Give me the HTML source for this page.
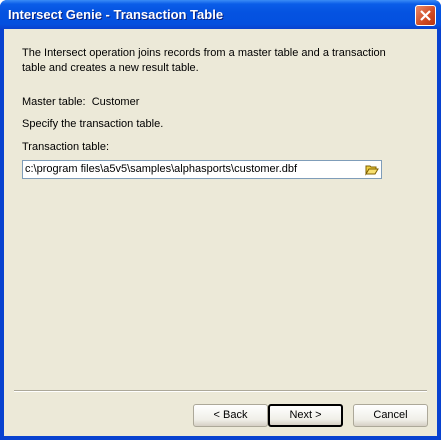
<!DOCTYPE html>
<html><head><style>
*{margin:0;padding:0;box-sizing:border-box}
body{width:441px;height:440px;overflow:hidden;font-family:"Liberation Sans",sans-serif;font-size:11px;color:#000;background:#fff}
#win{position:absolute;left:0;top:0;width:441px;height:440px;background:#0842d0;border-radius:7px 7px 0 0}
#title{position:absolute;left:0;top:0;width:441px;height:30px;border-radius:7px 7px 0 0;background:linear-gradient(#3a8cf6 0,#0a5de8 4px,#0553e1 12px,#0450df 24px,#0a3fcb 30px)}
#title span{position:absolute;left:8px;top:7px;color:#fff;font-weight:bold;font-size:13px;text-shadow:1px 1px #0a1f7a}
#close{position:absolute;left:415px;top:5px;width:21px;height:21px;border:1px solid #fff;border-radius:3px;background:linear-gradient(135deg,#e88a6a,#d04a22 60%,#b83410)}
#body{position:absolute;left:4px;top:29px;width:433px;height:407px;background:#ece9d8}
.t{position:absolute;white-space:nowrap}
#inp{position:absolute;left:18px;top:131px;width:360px;height:19px;background:#fff;border:1px solid #7f9db9}
.btn{position:absolute;top:375px;width:75px;height:23px;border:1px solid #003c74;border-radius:3px;background:linear-gradient(#fff,#f0efe8 70%,#d6d0c5);text-align:center;line-height:21px}
</style></head><body>
<div id="win">
<div id="title"><span>Intersect Genie - Transaction Table</span>
<div id="close"><svg width="19" height="19"><path d="M5 5L14 14M14 5L5 14" stroke="#fff" stroke-width="2.2"/></svg></div></div>
<div id="body">
<div class="t" style="left:18px;top:18px">The Intersect operation joins records from a master table and a transaction</div>
<div class="t" style="left:18px;top:33px">table and creates a new result table.</div>
<div class="t" style="left:18px;top:67px">Master table:&nbsp; Customer</div>
<div class="t" style="left:18px;top:89px">Specify the transaction table.</div>
<div class="t" style="left:18px;top:112px">Transaction table:</div>
<div id="inp"><div class="t" style="left:2px;top:2px">c:\program files\a5v5\samples\alphasports\customer.dbf</div>
<svg style="position:absolute;left:342px;top:2px" width="14" height="13"><path d="M1 3h4l1 1h5v2H4L1 11z" fill="#f0d040" stroke="#806000"/><path d="M1 11l3-5h9l-3 5z" fill="#f8e070" stroke="#806000"/></svg></div>
<div style="position:absolute;left:10px;top:361px;width:413px;height:2px;border-top:1px solid #aca899;border-bottom:1px solid #fff"></div>
<div class="btn" style="left:189px;border-color:#aca899">&lt; Back</div>
<div class="btn" style="left:264px;border:2px solid #000;line-height:19px">Next &gt;</div>
<div class="btn" style="left:349px;border-color:#aca899">Cancel</div>
</div></div>
</body></html>
